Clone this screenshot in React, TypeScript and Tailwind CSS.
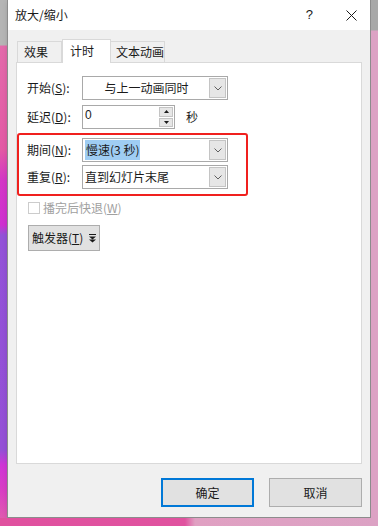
import React from 'react'

const font = { fontFamily: "'Noto Sans CJK SC', 'Microsoft YaHei', sans-serif" }

function Chevron() {
  return (
    <svg width="8" height="5" viewBox="0 0 8 5" fill="none">
      <path d="M0.5 0.5 L4 4 L7.5 0.5" stroke="#606060" strokeWidth="1" />
    </svg>
  )
}

function Combo({ children, wide = true }: { children: React.ReactNode; wide?: boolean }) {
  return (
    <div className={`h-[24px] ${wide ? 'w-[146px]' : ''} flex items-stretch border border-[#a9a9a9] bg-white`}>
      <div className="flex-1 flex items-center pl-[1px] overflow-hidden">{children}</div>
      <div className="w-[17px] my-[1px] mr-[1px] flex items-center justify-center bg-[#e6e6e6] border border-[#c4c4c4]">
        <Chevron />
      </div>
    </div>
  )
}

function Label({ text, k }: { text: string; k: string }) {
  return (
    <span className="w-[55px] shrink-0 text-[12px] leading-[16px] text-[#1a1a1a]">
      {text}(<span className="underline">{k}</span>):
    </span>
  )
}

export default function App() {
  return (
    <div className="w-[378px] h-[526px] flex flex-col overflow-hidden bg-[#dca2c4]" style={font}>
      <div className="flex h-[518px]">
        <div className="w-[7px] bg-[linear-gradient(to_bottom,#b5b5b5_0px,#b5b5b5_45px,#e36aab_46px,#e35aa5_150px,#d437c6_180px,#cf2fd0_225px,#9352d8_235px,#9450d6_450px,#cf35d6_465px,#d93ec4_490px,#e05ab0_518px)]" />
        <div className="w-[364px] flex flex-col bg-[#f0f0f0] border border-t-0 border-[#8c8c8c] shadow-[2px_2px_6px_rgba(0,0,0,0.25)]">
          {/* title bar */}
          <div className="h-[30px] bg-white flex items-center pl-[7px] pr-[13px]">
            <span className="text-[12px] leading-[16px] text-[#1a1a1a] flex-1">放大/缩小</span>
            <span className="text-[13px] leading-[16px] text-[#1a1a1a] mr-[33px]" style={{ fontFamily: "'Liberation Sans', sans-serif" }}>?</span>
            <svg width="11" height="11" viewBox="0 0 11 11">
              <path d="M0.5 0.5 L10.5 10.5 M10.5 0.5 L0.5 10.5" stroke="#1a1a1a" strokeWidth="1" />
            </svg>
          </div>

          {/* body */}
          <div className="flex-1 flex flex-col px-[8px] pt-[9px] pb-[10px]">
            {/* tabs */}
            <div className="flex items-end h-[23px] pl-[1px] relative z-10">
              <div className="h-[21px] w-[45px] border border-b-0 border-[#d9d9d9] bg-[#f0f0f0] flex items-center pl-[6px] text-[12px] text-[#1a1a1a]">效果</div>
              <div className="h-[24px] w-[49px] -mb-[1px] border border-b-0 border-[#d9d9d9] bg-white flex items-center pl-[7px] pb-[2px] text-[12px] text-[#1a1a1a]">计时</div>
              <div className="h-[21px] w-[54px] border border-b-0 border-l-0 border-[#d9d9d9] bg-[#f0f0f0] flex items-center pl-[5px] text-[12px] text-[#1a1a1a]">文本动画</div>
            </div>

            {/* panel */}
            <div className="h-[402px] border border-[#d9d9d9] bg-white flex flex-col pt-[13px]">
              <div className="flex items-center pl-[10px] h-[24px]">
                <Label text="开始" k="S" />
                <Combo>
                  <span className="flex-1 text-center text-[12px] leading-[16px] text-[#1a1a1a]">与上一动画同时</span>
                </Combo>
              </div>

              <div className="flex items-center pl-[10px] h-[24px] mt-[5px]">
                <Label text="延迟" k="D" />
                <div className="h-[24px] w-[93px] flex border border-[#a9a9a9] bg-white">
                  <span className="flex-1 pl-[2px] pt-[1px] text-[12px] leading-[16px] text-[#1a1a1a]" style={{ fontFamily: "'Liberation Sans', sans-serif" }}>0</span>
                  <div className="w-[14px] flex flex-col gap-[1px] py-[1px] mr-[1px]">
                    <div className="flex-1 bg-[#e6e6e6] border border-[#c4c4c4] flex items-center justify-center">
                      <svg width="5" height="3" viewBox="0 0 5 3"><path d="M2.5 0 L5 3 L0 3 Z" fill="#1a1a1a" /></svg>
                    </div>
                    <div className="flex-1 bg-[#e6e6e6] border border-[#c4c4c4] flex items-center justify-center">
                      <svg width="5" height="3" viewBox="0 0 5 3"><path d="M0 0 L5 0 L2.5 3 Z" fill="#1a1a1a" /></svg>
                    </div>
                  </div>
                </div>
                <span className="ml-[11px] text-[12px] leading-[16px] text-[#1a1a1a]">秒</span>
              </div>

              {/* highlighted group */}
              <div className="w-[231px] h-[63px] mt-[4px] border-2 border-[#f0201e] rounded-[3px] flex flex-col pl-[8px] pt-[3px] gap-[3px]">
                <div className="flex items-center h-[24px]">
                  <Label text="期间" k="N" />
                  <Combo>
                    <span className="ml-[1px] px-[1px] h-[20px] flex items-center bg-[#9fcdf3] text-[12px] text-[#1a1a1a]">慢速(3 秒)</span>
                  </Combo>
                </div>
                <div className="flex items-center h-[24px]">
                  <Label text="重复" k="R" />
                  <Combo>
                    <span className="pl-[1px] text-[12px] leading-[16px] text-[#1a1a1a]">直到幻灯片末尾</span>
                  </Combo>
                </div>
              </div>

              <div className="flex items-center pl-[11px] mt-[5px] h-[14px]">
                <div className="w-[12px] h-[12px] border border-[#cccccc] bg-white" />
                <span className="ml-[3px] text-[12px] leading-[16px] text-[#a0a0a0]">
                  播完后快退(<span className="underline">W</span>)
                </span>
              </div>

              <div className="ml-[11px] mt-[10px] w-[72px] h-[26px] border border-[#adadad] bg-[#e1e1e1] flex items-center pl-[3px] gap-[6px]">
                <span className="text-[12px] leading-[16px] text-[#1a1a1a]">
                  触发器(<span className="underline">T</span>)
                </span>
                <svg width="7" height="9" viewBox="0 0 7 9">
                  <path d="M0 0.5 H7" stroke="#1a1a1a" strokeWidth="1" />
                  <path d="M0 2.5 L7 2.5 L3.5 5.5 Z" fill="#1a1a1a" />
                  <path d="M0 5.5 L7 5.5 L3.5 8.5 Z" fill="#1a1a1a" />
                </svg>
              </div>
            </div>

            {/* buttons */}
            <div className="flex-1 flex items-end justify-end gap-[15px]">
              <div className="w-[93px] h-[29px] border-2 border-[#0078d7] bg-[#e1e1e1] flex items-center justify-center text-[12px] text-[#1a1a1a]">确定</div>
              <div className="w-[93px] h-[29px] border border-[#adadad] bg-[#e1e1e1] flex items-center justify-center text-[12px] text-[#1a1a1a]">取消</div>
            </div>
          </div>
        </div>
        <div className="flex-1 bg-[linear-gradient(to_bottom,#a8a8a8_0px,#a8a8a8_30px,#dca2c4_31px)]" />
      </div>
      <div className="h-[8px] bg-[linear-gradient(to_right,#e0519f_0px,#e0529f_185px,#e0a0c2_195px,#dca2c4_378px)]" />
    </div>
  )
}
